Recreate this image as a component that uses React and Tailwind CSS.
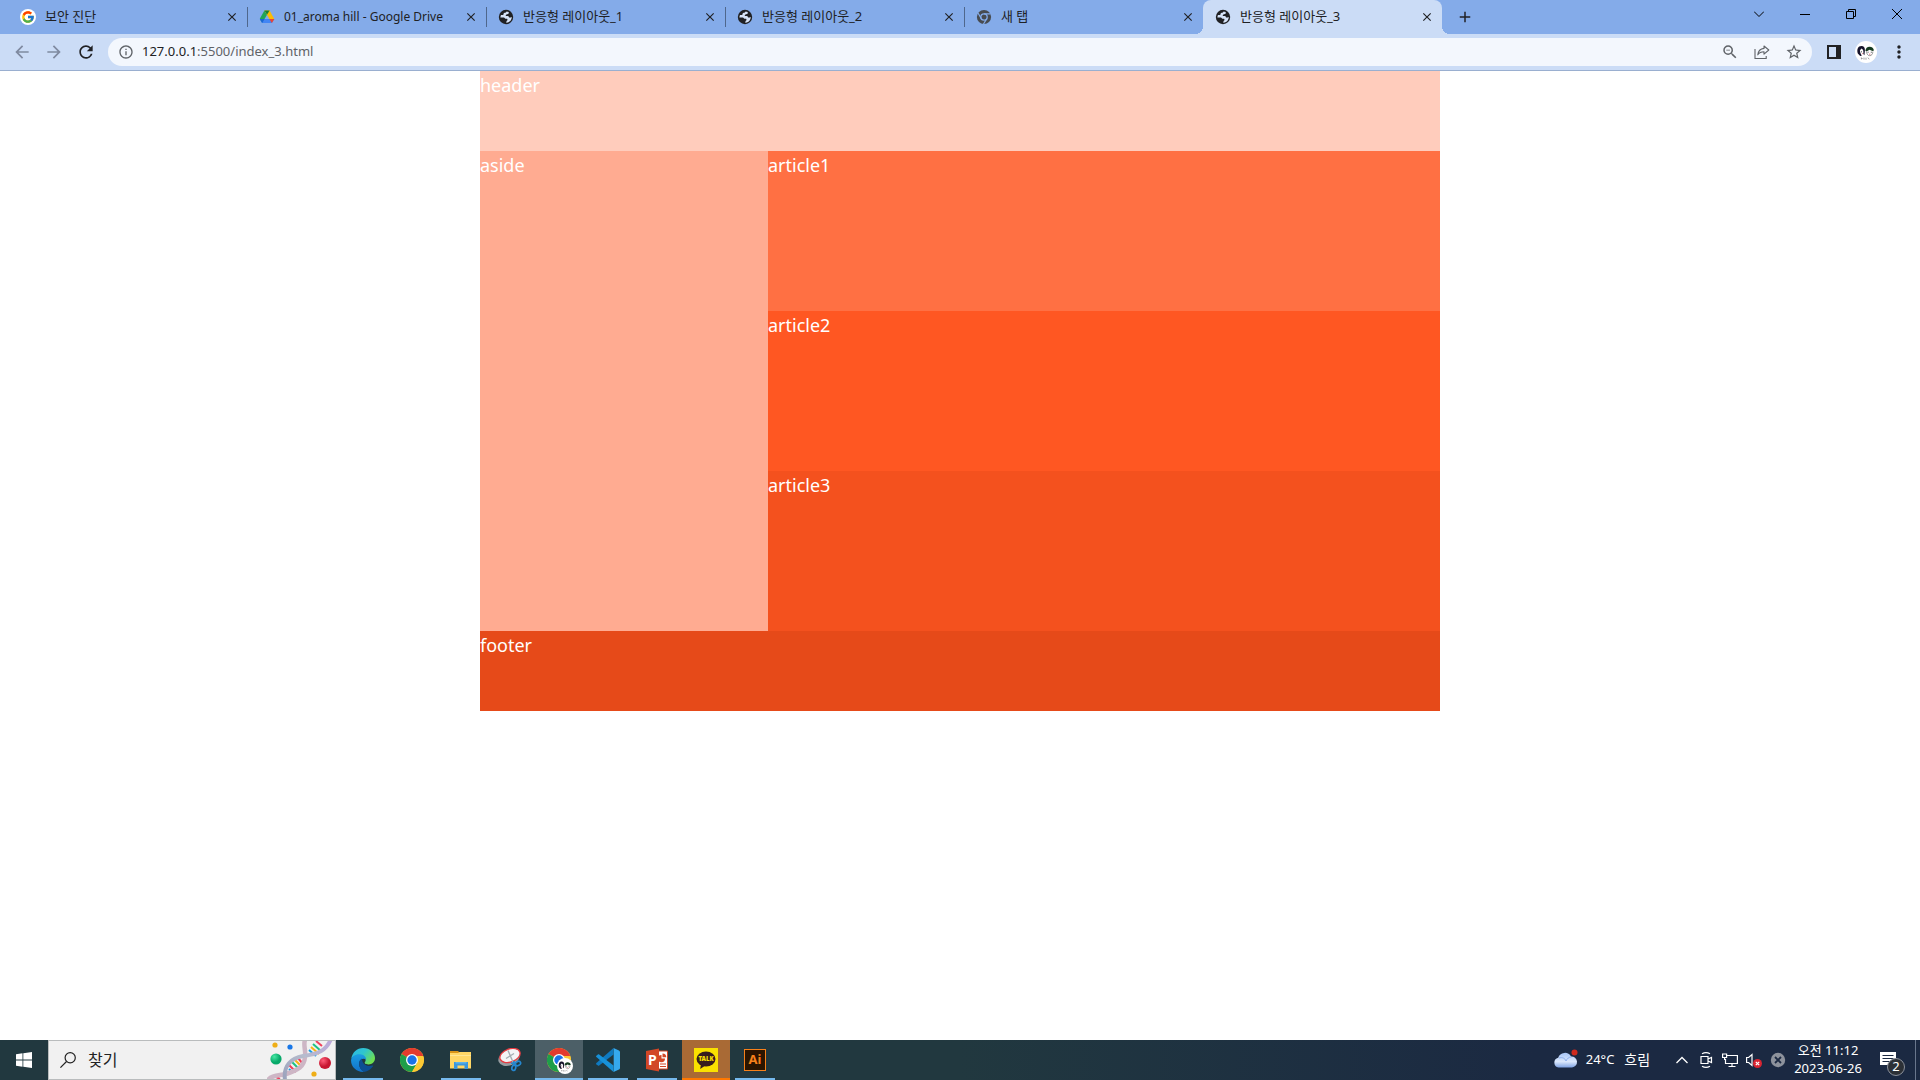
import { useState } from 'react';
import { FcGoogle } from 'react-icons/fc';
import {
  MdAdd,
  MdArrowBack,
  MdArrowForward,
  MdClose,
  MdInfoOutline,
  MdMoreVert,
  MdRefresh,
  MdStarBorder,
  MdZoomOut,
} from 'react-icons/md';

/* ---------- favicons ---------- */

function GoogleIcon() {
  return (
    <span className="flex h-4 w-4 items-center justify-center rounded-full bg-white">
      <FcGoogle className="h-3.5 w-3.5" />
    </span>
  );
}

function DriveIcon() {
  return (
    <svg viewBox="0 0 16 16" className="h-4 w-4">
      <path d="M5.4 1.5 0.8 9.8 3.2 14 8 5.8z" fill="#22a556" />
      <path d="M5.4 1.5h5.2L15.3 10h-4.9z" fill="#fbbc04" />
      <path d="M5.4 1.5h5.2L8 5.8z" fill="#188038" />
      <path d="M0.8 10h14.5l-2.4 4H3.2z" fill="#4285f4" />
      <path d="M10.4 10h4.9l-2.4 4z" fill="#ea4335" />
      <path d="M0.8 10h4.8l-2.4 4z" fill="#1967d2" />
    </svg>
  );
}

function GlobeIcon() {
  return (
    <svg viewBox="0 0 16 16" className="h-4 w-4">
      <circle cx="8" cy="8" r="7.2" fill="#202124" />
      <path
        d="M8.6 2.4 10.6 2.9c.5.9.2 1.7-.6 2.1L8.3 5.6 7.6 7H9.8c.9.1 1.2.8 1.2 1.5h1.6l1.2-.5c0 2.6-1.6 4.8-4 5.5L8.2 13.7l.4-1.6 1-1-.5-1.3H7.4L6 8.4H2.4c0-1 .2-1.8.6-2.5h2.2L5.9 4l2-.4z"
        fill="#d6e3f8"
      />
    </svg>
  );
}

function ChromeGrayIcon() {
  return (
    <svg viewBox="0 0 16 16" className="h-4 w-4">
      <circle cx="8" cy="8" r="7.1" fill="#474b50" />
      <circle cx="8" cy="8" r="3.2" fill="none" stroke="#84abe9" strokeWidth="1.3" />
      <path d="M8 4.8h6.6M5.3 9.6 2 4M10.7 9.6 7.4 15.2" stroke="#84abe9" strokeWidth="1.2" />
    </svg>
  );
}

/* ---------- toolbar icons ---------- */

function ShareIcon() {
  return (
    <svg viewBox="0 0 16 16" className="h-4 w-4" fill="none" stroke="#5f6368" strokeWidth="1.1">
      <path d="M1 5v9.5h11.2V12" />
      <path d="M10 2 14.8 6 10 10.2V7.8C7.2 7.8 5.2 8.7 3.8 10.8 4.2 7.3 6.2 4.9 10 4.4z" strokeLinejoin="round" />
    </svg>
  );
}

function PanelIcon() {
  return (
    <svg viewBox="0 0 14 14" className="h-3.5 w-3.5">
      <path d="M0 0h14v14H0zM2 2v10h7V2z" fill="#202124" fillRule="evenodd" />
    </svg>
  );
}

function Faces() {
  return (
    <svg viewBox="0 0 22 22" className="h-full w-full">
      <circle cx="11" cy="11" r="11" fill="#fff" />
      <path d="M2.8 12.6C1.6 8 3 5 6.4 4.9 9 4.9 10.2 6.8 9.9 9.5L9.4 14.2 8.3 13C8.8 10 8.1 8.2 6.4 7.6L4.9 9.6 5.4 12l1.4 2.8-1.6.2z" fill="#17142c" />
      <path d="M10.4 9.9c.2-2.7 1.8-4.2 4.2-4.2s4.200 1.500 4.300 3.800l-1.400.5-3-1.200-2.600 1.500z" fill="#153b20" />
      <path d="M11.5 10.5c.3 2.800 1.500 4.200 3.200 4.200s3.100-1.400 3.200-4.200" fill="none" stroke="#555" strokeWidth=".6" />
      <path d="M12.600 11.200h1M15.800 11.200h1M6 10.800h1" stroke="#222" strokeWidth=".8" />
      <path d="M14 13.200h1.400M7 12.600h.8" stroke="#e0485c" strokeWidth=".8" />
      <path d="M6.400 18.400v-1.700l1.200 1.300M9 18.600v-2M11 16.700v2M13 16.600l1.200 1.700" stroke="#777" strokeWidth=".7" fill="none" />
    </svg>
  );
}

/* ---------- taskbar icons ---------- */

function ChromeIcon() {
  return (
    <svg viewBox="0 0 24 24" className="h-6 w-6">
      <circle cx="12" cy="12" r="12" fill="#fcc934" />
      <path d="M12 12 1.6 6A12 12 0 0 1 22.4 6z" fill="#e33b2e" />
      <path d="M1.6 6A12 12 0 0 0 12 24l5.2-9L12 12z" fill="#1e9e4a" />
      <path d="M12 6h10.4a12 12 0 0 1 .8 2H12z" fill="#e33b2e" />
      <path d="M12 24a12 12 0 0 0 11.2-16H13l4.2 7z" fill="#fcc934" />
      <circle cx="12" cy="12" r="6" fill="#fff" />
      <circle cx="12" cy="12" r="4.7" fill="#1a73e8" />
    </svg>
  );
}

function ChromeProfileIcon() {
  return (
    <span className="relative block h-6 w-6">
      <ChromeIcon />
      <span className="absolute -right-0.5 -bottom-0.5 h-4 w-4">
        <Faces />
      </span>
    </span>
  );
}

function EdgeIcon() {
  return (
    <svg viewBox="0 0 24 24" className="h-6 w-6">
      <defs>
        <linearGradient id="edgeTop" x1="0" y1="0" x2="1" y2="0.6">
          <stop offset="0" stopColor="#2bb7e8" />
          <stop offset=".5" stopColor="#2fc5cf" />
          <stop offset="1" stopColor="#6fe04f" />
        </linearGradient>
        <linearGradient id="edgeSide" x1="0" y1="0" x2="0" y2="1">
          <stop offset="0" stopColor="#1b9de2" />
          <stop offset="1" stopColor="#1271c9" />
        </linearGradient>
      </defs>
      <path d="M.3 10.6C1.2 4.6 6 0 12.2 0 19 0 24 4.8 24 10c0 4-3 6.4-6.6 6.4-2.8 0-4.4-1-3.4-2.3C16 11 13.5 8 9.5 7.4 5.5 6.9 2 8.2.3 10.6z" fill="url(#edgeTop)" />
      <path d="M.1 12C.4 8.3 4.4 5.8 9 6.2c4 .4 6.4 2.9 6.1 5.4-1.8-1.8-6.1-1-6.9 3-.8 3.6 1.5 7.3 4.8 9.4C5.5 24.2-.4 18.8.1 12z" fill="url(#edgeSide)" />
      <path d="M8.2 14.2c.2-1.7 1.4-3 2.8-3.8-.2 5.3 4.7 8.9 10.4 7.2.6-.2 1 .2.6.7-2 3-5.2 5.2-9 5.7-3.3-1.7-5.2-5.6-4.8-9.8z" fill="#0c4f93" />
    </svg>
  );
}

function ExplorerIcon() {
  return (
    <svg viewBox="0 0 24 24" className="h-6 w-6">
      <path d="M1 3h8l2 2H1z" fill="#d99518" />
      <path d="M1 5h8l1.5-1H22v16.5H1z" fill="#ffd766" />
      <path d="M1 7h21v1H1z" fill="#ffe694" />
      <path d="M5 14h14v7h-3.5v-3.5h-7V21H5z" fill="#3b97dd" />
      <path d="M6.5 14h11v1.5h-11z" fill="#5bb3ea" />
    </svg>
  );
}

function SnipIcon() {
  return (
    <svg viewBox="0 0 24 24" className="h-6 w-6">
      <ellipse cx="11" cy="10" rx="11" ry="7.5" transform="rotate(-20 11 10)" fill="#969ca0" />
      <ellipse cx="12" cy="7.5" rx="10.5" ry="6.5" transform="rotate(-20 12 7.5)" fill="#f4f4f5" stroke="#e63b40" strokeWidth="1.3" />
      <path d="m10 2.5 5 11.5M8 10.5l8-5" stroke="#a5adb2" strokeWidth="1.4" />
      <g fill="none" stroke="#2587cf" strokeWidth="1.7">
        <ellipse cx="20" cy="15.5" rx="2.7" ry="2" transform="rotate(-25 20 15.5)" />
        <ellipse cx="15.8" cy="19.7" rx="1.9" ry="2.7" transform="rotate(15 15.8 19.7)" />
        <path d="m13 15 5 .8M15.8 17l.2-4" />
      </g>
    </svg>
  );
}

function VsCodeIcon() {
  return (
    <svg viewBox="0 0 24 24" className="h-6 w-6">
      <path d="M17.5 0v6.5L3.2 17.6c-.4.3-.9.3-1.3 0L.4 16.2a.9.9 0 0 1 0-1.3z" fill="#0f7ac0" />
      <path d="M17.5 24v-6.5L3.2 6.4c-.4-.3-.9-.3-1.3 0L.4 7.8a.9.9 0 0 0 0 1.3z" fill="#1791d8" />
      <path d="M17.5 0 23 2.5c.6.3 1 .9 1 1.5v16c0 .7-.4 1.2-1 1.5L17.5 24c.2-.2.2-.5.2-1V1c0-.5 0-.8-.2-1z" fill="#35a9ee" />
    </svg>
  );
}

function PowerPointIcon() {
  return (
    <span className="relative flex h-6 w-6 items-center">
      <svg viewBox="0 0 24 24" className="absolute inset-0 h-6 w-6">
        <path d="M12 3h10.5v18H12z" fill="#fff" stroke="#d24726" strokeWidth="1" />
        <path d="M16.5 7v3.5H20a3.6 3.6 0 1 1-3.5-3.5z" fill="#d24726" />
        <path d="M17.5 5.5a3.8 3.8 0 0 1 3.8 3.8h-3.8zM15 15.500h6v1h-6zM15 18h6v1h-6z" fill="#d24726" />
        <path d="m1 3 13-2.500v23L1 21z" fill="#d24726" />
      </svg>
      <span className="relative pl-[3px] text-sm font-bold text-white">P</span>
    </span>
  );
}

function KakaoIcon() {
  return (
    <span className="relative flex h-6 w-6 items-center justify-center bg-[#fae100]">
      <svg viewBox="0 0 24 24" className="absolute inset-0 h-6 w-6">
        <ellipse cx="12" cy="11" rx="9.5" ry="7.5" fill="#371d1e" />
        <path d="m7 16-.8 5L12 17z" fill="#371d1e" />
      </svg>
      <span className="relative pb-0.5 text-[6px] leading-none font-black text-[#fae100]">TALK</span>
    </span>
  );
}

function IllustratorIcon() {
  return (
    <span className="flex h-[22px] w-[22px] items-center justify-center border border-[#f7801a] bg-[#2b1400] text-[13px] font-bold text-[#f7801a]">
      Ai
    </span>
  );
}

function DnaArt() {
  return (
    <svg viewBox="0 0 68 38" className="h-[38px] w-[68px] shrink-0">
      <defs>
        <linearGradient id="strand" x1="0" y1="1" x2="1" y2="0">
          <stop offset="0" stopColor="#9ba2bc" />
          <stop offset=".5" stopColor="#b6bccd" />
          <stop offset="1" stopColor="#bba7dc" />
        </linearGradient>
        <radialGradient id="green" cx=".35" cy=".3">
          <stop offset="0" stopColor="#48e8a5" />
          <stop offset="1" stopColor="#07a969" />
        </radialGradient>
        <radialGradient id="red" cx=".35" cy=".3">
          <stop offset="0" stopColor="#ff5d79" />
          <stop offset="1" stopColor="#c71731" />
        </radialGradient>
      </defs>
      <g strokeWidth="2">
        <path d="m9 36 4 2M22 24l7 7" stroke="#ef3f5c" />
        <path d="m22 28 4 4M42 9l7 6" stroke="#159de6" />
        <path d="m25 21 7 7" stroke="#1bc187" />
        <path d="m28 19 7 7M44 6l8 7" stroke="#f7b512" />
        <path d="m31 17 5 6M49 0l6 5" stroke="#ef3f5c" />
        <path d="m46 3 8 7" stroke="#1bc187" />
      </g>
      <path d="M1 39c5-6 12-4 18-6 12-4 18-7 19-17C39 9 36 4 38-1" fill="none" stroke="#cdb6c5" strokeWidth="4.5" />
      <path d="M18 39c-2-14 6-22 18-24 15-2 23-5 28-17" fill="none" stroke="url(#strand)" strokeWidth="4" />
      <circle cx="8" cy="4" r="2.6" fill="#efae16" />
      <circle cx="23" cy="6" r="2.6" fill="#1877e8" />
      <circle cx="9" cy="18" r="5.6" fill="url(#green)" />
      <circle cx="58" cy="22" r="6" fill="url(#red)" />
      <circle cx="47" cy="33" r="2.6" fill="#efae16" />
    </svg>
  );
}

const tabs = [
  { title: '보안 진단', icon: GoogleIcon },
  { title: '01_aroma hill - Google Drive', icon: DriveIcon, latin: true },
  { title: '반응형 레이아웃_1', icon: GlobeIcon },
  { title: '반응형 레이아웃_2', icon: GlobeIcon },
  { title: '새 탭', icon: ChromeGrayIcon },
  { title: '반응형 레이아웃_3', icon: GlobeIcon, active: true },
];

function Tab({ tab, divider }) {
  const Icon = tab.icon;
  return (
    <div
      className={`relative flex h-full w-[239px] min-w-0 items-center pr-[7px] pl-3 ${
        tab.active ? 'rounded-t-lg bg-[#cbdcf6]' : ''
      }`}
    >
      {tab.active && (
        <>
          <span className="absolute bottom-0 -left-2 h-2 w-2 bg-[radial-gradient(circle_at_0_0,transparent_8px,#cbdcf6_8px)]" />
          <span className="absolute -right-2 bottom-0 h-2 w-2 bg-[radial-gradient(circle_at_100%_0,transparent_8px,#cbdcf6_8px)]" />
        </>
      )}
      <Icon />
      <span className={`ml-[9px] flex-1 truncate text-[#202124] ${tab.latin ? 'text-xs' : 'text-[13px]'}`}>
        {tab.title}
      </span>
      <button aria-label="탭 닫기" className="flex h-4 w-4 items-center justify-center text-[#202124]">
        <MdClose className="h-3.5 w-3.5" />
      </button>
      {divider && <span className="absolute top-[7px] -right-px h-5 w-px bg-[#4f678c]" />}
    </div>
  );
}

function WindowControls() {
  const button = 'flex h-7 w-[46px] items-center justify-center';
  const icon = 'h-2.5 w-2.5';
  return (
    <div className="ml-auto flex shrink-0 self-start text-black">
      <button aria-label="탭 검색" className={button}>
        <svg viewBox="0 0 10 10" className={icon} fill="none" stroke="currentColor">
          <path d="m0 2.5 5 5 5-5" />
        </svg>
      </button>
      <button aria-label="최소화" className={button}>
        <svg viewBox="0 0 10 10" className={icon} stroke="currentColor">
          <path d="M0 5.5h10" />
        </svg>
      </button>
      <button aria-label="이전 크기로 복원" className={button}>
        <svg viewBox="0 0 10 10" className={icon} fill="none" stroke="currentColor">
          <path d="M.5 2.5h7v7h-7zM2.500 2.5v-2h7v7h-2" />
        </svg>
      </button>
      <button aria-label="닫기" className={button}>
        <svg viewBox="0 0 10 10" className={icon} fill="none" stroke="currentColor">
          <path d="m0 0 10 10M10 0 0 10" />
        </svg>
      </button>
    </div>
  );
}

function Browser() {
  return (
    <div>
      <div className="flex h-[34px] items-center bg-[#84abe9] pl-2">
        {tabs.map((tab, i) => (
          <Tab key={tab.title} tab={tab} divider={i < 4} />
        ))}
        <button aria-label="새 탭" className="ml-[13px] flex h-5 w-5 items-center justify-center text-[#202124]">
          <MdAdd className="h-[18px] w-[18px]" />
        </button>
        <WindowControls />
      </div>

      <div className="flex h-[37px] items-center border-b border-[#9aafd0] bg-[#cbdcf6] pr-[11px] pl-3">
        <div className="flex gap-3 text-[#202124]">
          <button aria-label="뒤로" className="text-[#7f8aa0]">
            <MdArrowBack className="h-5 w-5" />
          </button>
          <button aria-label="앞으로" className="text-[#7f8aa0]">
            <MdArrowForward className="h-5 w-5" />
          </button>
          <button aria-label="새로고침">
            <MdRefresh className="h-5 w-5" />
          </button>
        </div>

        <div className="ml-3 flex h-7 flex-1 items-center rounded-full bg-[#f3f7fd] pr-[9px] pl-2.5 text-[#5f6368]">
          <button aria-label="사이트 정보">
            <MdInfoOutline className="h-4 w-4" />
          </button>
          <p className="ml-2 flex-1 text-[13px]">
            <span className="text-[#202124]">127.0.0.1</span>:5500/index_3.html
          </p>
          <div className="flex items-center gap-[15px]">
            <button aria-label="축소">
              <MdZoomOut className="h-[18px] w-[18px]" />
            </button>
            <button aria-label="공유">
              <ShareIcon />
            </button>
            <button aria-label="북마크">
              <MdStarBorder className="h-[18px] w-[18px]" />
            </button>
          </div>
        </div>

        <button aria-label="측면 패널" className="ml-[15px]">
          <PanelIcon />
        </button>
        <button aria-label="프로필" className="ml-3.5 h-[22px] w-[22px]">
          <Faces />
        </button>
        <button aria-label="메뉴" className="ml-3 text-[#202124]">
          <MdMoreVert className="h-5 w-5" />
        </button>
      </div>
    </div>
  );
}

function Page() {
  return (
    <div className="flex-1 bg-white">
      <div className="mx-auto w-full max-w-[960px] text-lg text-white">
        <header className="h-20 bg-[#ffccbc]">header</header>
        <div className="flex">
          <aside className="w-[30%] bg-[#ffab91]">aside</aside>
          <main className="flex-1">
            <article className="h-40 bg-[#ff7043]">article1</article>
            <article className="h-40 bg-[#ff5722]">article2</article>
            <article className="h-40 bg-[#f4511e]">article3</article>
          </main>
        </div>
        <footer className="h-20 bg-[#e64a19]">footer</footer>
      </div>
    </div>
  );
}

const apps = [
  { name: 'Edge', icon: EdgeIcon, bar: 'w-10 bg-[#76b9ed]' },
  { name: 'Chrome', icon: ChromeIcon },
  { name: '파일 탐색기', icon: ExplorerIcon, bar: 'w-10 bg-[#76b9ed]' },
  { name: '캡처 도구', icon: SnipIcon },
  { name: 'Chrome 프로필', icon: ChromeProfileIcon, bg: 'bg-[#4c5f67]', bar: 'w-full bg-[#76b9ed]' },
  { name: 'Visual Studio Code', icon: VsCodeIcon, bar: 'w-10 bg-[#76b9ed]' },
  { name: 'PowerPoint', icon: PowerPointIcon, bar: 'w-10 bg-[#76b9ed]' },
  { name: '카카오톡', icon: KakaoIcon, bg: 'bg-[#a96a35]', bar: 'w-full bg-[#ff7800]' },
  { name: 'Illustrator', icon: IllustratorIcon, bar: 'w-10 bg-[#76b9ed]' },
];

function Tray() {
  return (
    <div className="ml-auto flex h-full items-center text-[13px] text-white">
      <button className="flex items-center">
        <svg viewBox="0 0 26 22" className="h-[22px] w-[26px]">
          <defs>
            <linearGradient id="cloud" x1="0" y1="0" x2="0" y2="1">
              <stop offset="0" stopColor="#a7c5f6" />
              <stop offset=".6" stopColor="#dbe8fc" />
              <stop offset="1" stopColor="#7fa3e4" />
            </linearGradient>
          </defs>
          <path d="M5.5 18.500a5 5 0 0 1-.3-9.800A7 7 0 0 1 18 7.500a5.500 5.500 0 0 1 1 11z" fill="url(#cloud)" />
          <path d="M6 9c3-1 6 0 7 3 1-2.500 3-4 5.400-4" fill="none" stroke="#8cafee" strokeWidth="1" />
          <circle cx="21.500" cy="3.500" r="3" fill="#cf2a1e" />
        </svg>
        <span className="ml-[7px]">24°C</span>
        <span className="ml-2.5 text-sm">흐림</span>
      </button>

      <div className="ml-6 flex items-center gap-2">
        <button aria-label="숨겨진 아이콘 표시">
          <svg viewBox="0 0 16 16" className="h-4 w-4" fill="none" stroke="currentColor" strokeWidth="1.3">
            <path d="m2.500 11 5.500-5.500 5.500 5.500" />
          </svg>
        </button>
        <button aria-label="카메라">
          <svg viewBox="0 0 16 16" className="h-4 w-4" fill="none" stroke="currentColor" strokeWidth="1.2">
            <path d="M3 4.500h7v7H3zM10 7l3.500-1.500v5L10 9M4 1.800Q8-.5 12 1.800M4 14.200q4 2.300 8 0" />
          </svg>
        </button>
        <button aria-label="네트워크">
          <svg viewBox="0 0 16 16" className="h-4 w-4" fill="none" stroke="currentColor" strokeWidth="1.2">
            <path d="M5 3.500h10.400v8H3.500V7M10 11.500v3M6.500 14.500h7M.6 2h4v3.500h-4zM2.600 5.500V8" />
          </svg>
        </button>
        <button aria-label="음소거">
          <svg viewBox="0 0 16 16" className="h-4 w-4" fill="none" stroke="currentColor" strokeWidth="1.2">
            <path d="M.6 5.500h2L6 2.500v11l-3.400-3h-2z" />
            <circle cx="11.500" cy="11.500" r="4.500" fill="#d92532" stroke="none" />
            <path d="m9.800 9.800 3.400 3.400M13.200 9.800l-3.400 3.400" />
          </svg>
        </button>
        <button aria-label="연결 끊김">
          <svg viewBox="0 0 16 16" className="h-4 w-4">
            <circle cx="8" cy="8" r="7.200" fill="#8d929c" />
            <path d="m5 5 6 6M11 5l-6 6" stroke="#1b2942" strokeWidth="1.800" />
          </svg>
        </button>
      </div>

      <button className="ml-2 pb-0.5 text-center leading-[18px]">
        <span className="block">오전 11:12</span>
        <span className="block">2023-06-26</span>
      </button>

      <button aria-label="알림" className="relative ml-[17px] h-10 w-6">
        <svg viewBox="0 0 18 18" className="absolute top-3 left-0 h-[18px] w-[18px]">
          <path d="M1 0h16v13h-3v4l-4-4H1z" fill="#fff" />
          <path d="M3.500 3.500h11M3.500 6.500h11M3.500 9.500h8" stroke="#1b2942" />
        </svg>
        <span className="absolute top-[18px] left-2 flex h-[18px] w-[18px] items-center justify-center rounded-full border border-[#8b909a] bg-[#2c3036] text-[13px]">
          2
        </span>
      </button>
      <button aria-label="바탕 화면 보기" className="ml-3 h-full w-[5px] border-l border-[#69768c]" />
    </div>
  );
}

function Taskbar() {
  const [query, setQuery] = useState('');

  return (
    <div className="flex h-10 items-center bg-linear-to-r from-[#21383f] from-50% to-[#1b2942] to-80%">
      <button aria-label="시작" className="flex h-10 w-12 items-center justify-center">
        <svg viewBox="0 0 16 16" className="h-4 w-4" fill="#fff">
          <path d="M0 2.200 6.500 1.300v6.300H0zM7.300 1.200 16 0v7.600H7.300zM0 8.400h6.500v6.300L0 13.800zM7.300 8.400H16V16l-8.700-1.200z" />
        </svg>
      </button>

      <div className="flex h-full w-72 items-center overflow-hidden border border-[#b9bcbd] bg-[#f1f1f1] pl-[11px]">
        <svg viewBox="0 0 16 16" className="h-4 w-4 shrink-0" fill="none" stroke="#222" strokeWidth="1.2">
          <circle cx="10.200" cy="5.800" r="5.100" />
          <path d="M6.500 9.500.4 15.600" />
        </svg>
        <input
          type="text"
          aria-label="찾기"
          placeholder="찾기"
          value={query}
          onChange={(e) => setQuery(e.target.value)}
          className="ml-3 min-w-0 flex-1 bg-transparent text-base text-[#222] outline-none placeholder:text-[#222]"
        />
        <DnaArt />
      </div>

      <div className="ml-[3px] flex h-full gap-px">
        {apps.map((app) => {
          const Icon = app.icon;
          return (
            <button
              key={app.name}
              aria-label={app.name}
              className={`relative flex h-full w-12 items-center justify-center ${app.bg || ''}`}
            >
              <Icon />
              {app.bar && <span className={`absolute bottom-0 h-0.5 ${app.bar}`} />}
            </button>
          );
        })}
      </div>

      <Tray />
    </div>
  );
}

export default function App() {
  return (
    <div className="flex min-h-screen flex-col font-['Noto_Sans','Noto_Sans_CJK_KR',sans-serif]">
      <Browser />
      <Page />
      <Taskbar />
    </div>
  );
}
